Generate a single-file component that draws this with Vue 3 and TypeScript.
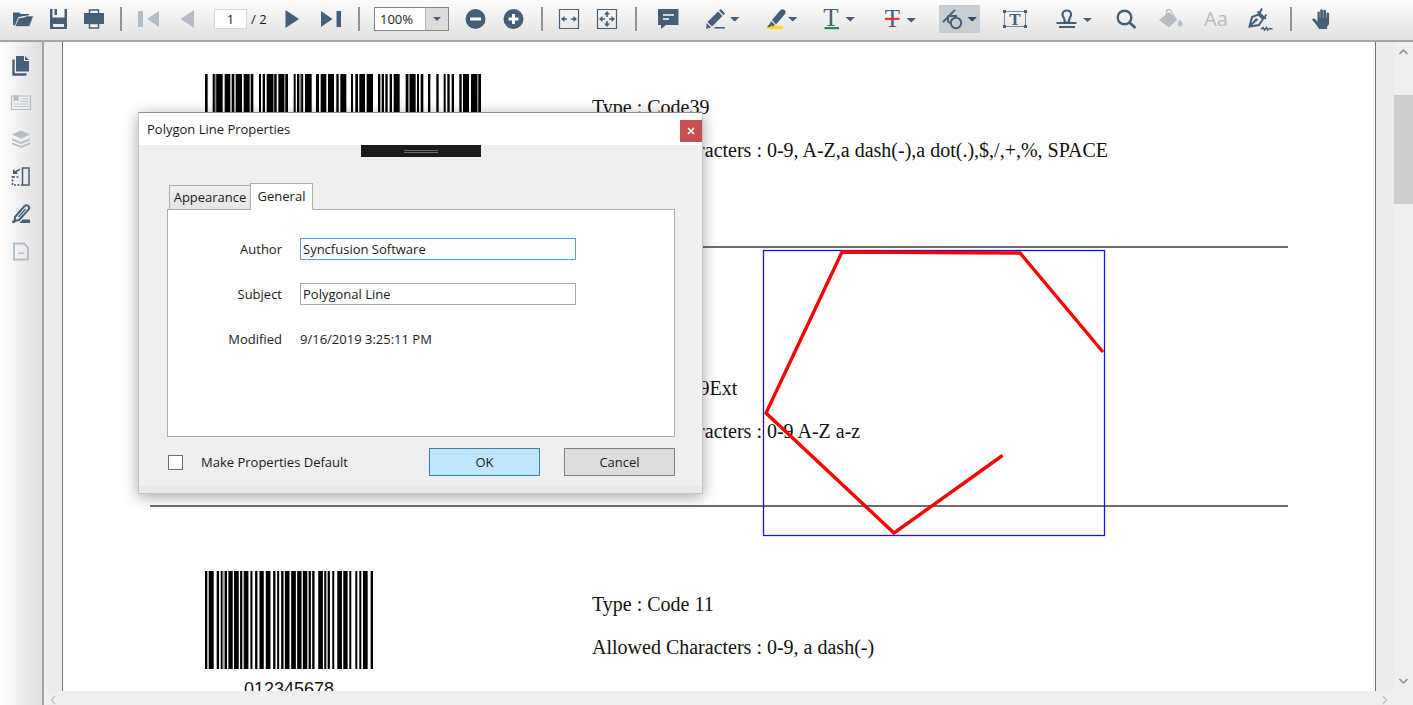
<script setup lang="ts">
import { ref } from 'vue'

type Bar = [start: number, end: number, faint?: boolean]

const code39: Bar[] = [
  [0, 8], [23, 53], [29, 34, true], [59, 76], [80, 88], [92, 111], [116, 134], [137, 145], [162, 168], [173, 180],
  [185, 204], [204, 216, true], [208, 214], [220, 237], [237, 241, true], [241, 249], [266, 272], [276, 283],
  [283, 295, true], [289, 294], [300, 320], [333, 342], [347, 364], [369, 387], [394, 401], [406, 424],
  [438, 444], [451, 459], [463, 480], [485, 504], [519, 526], [530, 537], [541, 548], [554, 561], [566, 584],
  [602, 609], [609, 614, true], [614, 632], [636, 642], [647, 655], [669, 676], [694, 701], [716, 722],
  [727, 734], [740, 747], [763, 770], [774, 792], [798, 816], [816, 820, true], [820, 828],
]

const code11: Bar[] = [
  [0, 7], [11, 26], [35, 42], [47, 53], [53, 59, true], [59, 66], [70, 83], [87, 101], [105, 111], [111, 117, true],
  [117, 130], [136, 142], [150, 157], [163, 176], [182, 196], [204, 211], [216, 222], [228, 235], [239, 253],
  [258, 272], [276, 289], [293, 306], [306, 311, true], [311, 317], [321, 328], [339, 353], [357, 363],
  [363, 368, true], [368, 374], [381, 387], [396, 410], [414, 427], [432, 438], [450, 456], [462, 468],
  [473, 487], [496, 503],
]

const page = ref('1')
const zoom = ref('100%')
const author = ref('Syncfusion Software')
const subject = ref('Polygonal Line')
const makeDefault = ref(false)
</script>

<template>
  <div class="app">
    <header class="toolbar" role="toolbar" aria-label="Document tools">
      <div class="group">
        <button class="tool" aria-label="Open">
          <svg width="22" height="28"><path d="M1 7.500h6l2 1.500h8v1.500l-5 .5-5.500 1L3 20.500 1 20z" /><path d="M6.500 13l6-1 2-1H21.500L17.500 21.500H3z" stroke="#f4f4f4" stroke-width=".6" /></svg>
        </button>
        <button class="tool" aria-label="Save">
          <svg width="18" height="28"><path d="M0 4h2.500v8.500h12V4H17v20H0zM3 19v3h11v-3z" fill-rule="evenodd" /><path d="M4.500 4H7v6H4.500z" /></svg>
        </button>
        <button class="tool" aria-label="Print">
          <svg width="20" height="28"><path d="M0 8h20v11H0z" /><path d="M5.500 8V5h9v3M5.500 18.500h9v4.500h-9z" fill="#f4f4f4" stroke="#465f78" stroke-width="1.500" /></svg>
        </button>
      </div>
      <span class="separator"></span>
      <div class="group">
        <button class="tool off" aria-label="First page" disabled>
          <svg width="22" height="28"><path d="M0 6h5v16H0zM9 14L21 6v16z" /></svg>
        </button>
        <button class="tool off" aria-label="Previous page" disabled>
          <svg width="22" height="28"><path d="M4.500 14L18 5v18z" /></svg>
        </button>
        <div class="pager">
          <input v-model="page" class="page-number" aria-label="Page number" />
          <span>/ 2</span>
        </div>
        <button class="tool" aria-label="Next page">
          <svg width="22" height="28"><path d="M3.500 5L17 14 3.500 23z" /></svg>
        </button>
        <button class="tool" aria-label="Last page">
          <svg width="22" height="28"><path d="M1 6l11.500 8L1 22zM16.500 6H21v16h-4.500z" /></svg>
        </button>
      </div>
      <span class="separator"></span>
      <div class="group zooming">
        <div class="zoom-box">
          <select v-model="zoom" aria-label="Zoom level">
            <option>50%</option>
            <option>100%</option>
            <option>200%</option>
          </select>
          <span class="zoom-arrow"><svg width="10" height="6"><path d="M1 1h8L5 5z" /></svg></span>
        </div>
        <button class="tool" aria-label="Zoom out">
          <svg width="22" height="28"><circle cx="10.500" cy="14" r="10" /><path d="M5 12.500h11v3H5z" fill="#fff" /></svg>
        </button>
        <button class="tool" aria-label="Zoom in">
          <svg width="22" height="28"><circle cx="10.500" cy="14" r="10" /><path d="M5.500 12.500H9V9h3v3.500h3.500v3H12V19H9v-3.500H5.500z" fill="#fff" /></svg>
        </button>
      </div>
      <span class="separator"></span>
      <div class="group">
        <button class="tool" aria-label="Fit width">
          <svg width="22" height="28"><path d="M.5 4.500h19v19H.5z" class="line" stroke-width="1.200" /><path d="M2 14l3.500-3v2.200H8v1.600H5.500V17zM18 14l-3.500-3v2.200H12v1.600h2.500V17z" /></svg>
        </button>
        <button class="tool" aria-label="Fit page">
          <svg width="22" height="28"><path d="M.5 4.500h19v19H.5z" class="line" stroke-width="1.200" /><path d="M2 14l3.500-3v2.200H8v1.600H5.500V17zM18 14l-3.500-3v2.200H12v1.600h2.500V17zM10 6l3 3.500h-2.200V12H9.200V9.500H7zM10 22l3-3.500h-2.200V16H9.200v2.500H7z" /></svg>
        </button>
      </div>
      <span class="separator"></span>
      <div class="group markup">
        <button class="tool" aria-label="Comment">
          <svg width="22" height="28"><path d="M1 4h20.500v16H9l-5 4v-4H1z" /><path d="M6 10h11M6 14h6" class="line light" stroke-width="1.600" /></svg>
        </button>
        <button class="tool" aria-label="Ink">
          <svg width="36" height="28"><path d="M15 6.500l4.500 4.500L9 21.500 4.500 17zM16 5.500L17.800 4 22 8.500l-1.500 1.700zM3.700 18L8 22.500 3 24z" /><path d="M11.500 22.800H22" class="line" stroke-width="1.500" /><path d="M27 12h9.500l-4.800 4.500z" /></svg>
        </button>
        <button class="tool" aria-label="Highlight">
          <svg width="34" height="28"><path d="M3 24l2-3h15v3z" fill="#fdd816" /><path d="M17.500 5Q19.500 3.500 21.500 5t.500 4L13 19.500 9 15zM8 16l4 4-2.500 1.500L8 20.500 7 22H4l3-3.500z" /><path d="M25 12h9.500l-4.800 4.500z" /></svg>
        </button>
        <button class="tool" aria-label="Underline">
          <svg width="34" height="28"><text x="10" y="21" class="serif-t">T</text><path d="M3.500 22h14.500v2.200H3.500z" fill="#139149" /><path d="M24.500 12h9.500l-4.800 4.500z" /></svg>
        </button>
        <button class="tool" aria-label="Strikethrough">
          <svg width="36" height="28"><text x="13.500" y="22" class="serif-t">T</text><path d="M6 12.800h14.500v2.200H6z" fill="#ff2d35" /><path d="M27.500 13h9.500l-4.800 4.500z" /></svg>
        </button>
        <button class="tool active" aria-label="Shapes">
          <svg width="41" height="28"><circle cx="17" cy="18" r="5.200" class="line" stroke-width="2" /><path d="M16 4.800L4 17M8.500 11H18M9 11v5.500l2 1.500" class="line" stroke-width="1.900" /><path d="M28.500 12H38l-4.800 4.500z" /></svg>
        </button>
        <button class="tool" aria-label="Text box">
          <svg width="24" height="28"><path d="M.5 6.500h21v15H.5z" class="line" stroke-width="1" opacity=".7" /><path d="M-1 5h3v3h-3zM20 5h3v3h-3zM-1 20h3v3h-3zM20 20h3v3h-3z" /><text x="11" y="20" class="small-t">T</text></svg>
        </button>
        <button class="tool" aria-label="Stamp">
          <svg width="40" height="28"><path d="M12.500 17.500C14 14 10.500 12.500 10.500 9.500a4.300 4 0 0 1 8.600 0c0 3-3.500 4.500-2 8z" class="line" stroke-width="2.200" /><path d="M4.500 18h20M7 22h16" class="line" stroke-width="2" /><path d="M31 13h9l-4.500 4z" /></svg>
        </button>
      </div>
      <div class="group extras">
        <button class="tool" aria-label="Search">
          <svg width="22" height="28"><circle cx="8.500" cy="12.500" r="6.800" class="line" stroke-width="2.400" /><path d="M13.500 17.500L19.500 23" class="line" stroke-width="2.800" /></svg>
        </button>
        <button class="tool off" aria-label="Fill colour" disabled>
          <svg width="26" height="28"><path d="M1 15L11 7l8.500 7.500L11 22.500z" /><path d="M8.500 12V7q0-2.500 2.500-2.500 1 0 2 1.500l5 8.500" class="line faint" stroke-width="1.300" /><path d="M21.500 14.500q4 3.500 3 5.500-1 2-3 1.500-2.500-1-1.500-4z" /></svg>
        </button>
        <button class="tool off font-tool" aria-label="Font" disabled>Aa</button>
        <button class="tool" aria-label="Signature">
          <svg width="26" height="28"><path d="M1.500 21.500L4 12l6.500-2.500 4.500 4.500-4 6zM1.500 21.500L7.500 15.500" class="line" stroke-width="2" /><circle cx="8.300" cy="14.800" r="1.500" /><path d="M9.500 6.500l8.500 7.500M11.500 8l2.500-4.500M16.500 12l2-2.500" class="line" stroke-width="1.900" /><path d="M13 24.500l2-2 1.500 2.500 2-2.500 1 2.500 2-1.500 3 .5" class="line" stroke-width="1.500" /></svg>
        </button>
      </div>
      <span class="separator"></span>
      <button class="tool" aria-label="Pan">
        <svg width="26" height="28"><path d="M4 14.500Q6 12.500 8 15l1.500 2V7q1.200-1.200 2.300 0v6h.4V5q1.400-1.300 2.700 0v8h.4V5.500q1.400-1.300 2.700 0V13h.4V8q1.400-1.200 2.700 0v10q0 2-2 3.500V24H11q-1-2-3-4.500z" /></svg>
      </button>
    </header>

    <div class="workspace">
      <nav class="sidebar" aria-label="Panels">
        <button class="tool" aria-label="Pages">
          <svg width="22" height="22"><path d="M6 1h8v5h5v10.500H6z" /><path d="M15 1l4 4h-4z" /><path d="M3.500 4.500v15h13" class="line" stroke-width="2.400" /></svg>
        </button>
        <button class="tool off" aria-label="Bookmarks" disabled>
          <svg width="22" height="22"><path d="M1.500 4h19v13.500h-19z" class="line faint" stroke-width="1.200" /><path d="M3.500 3.500h5V10L6 8l-2.500 2z" /><path d="M10.500 7h8M10.500 9.500h8M3.500 12h15M3.500 14.500h15" class="line faint" stroke-width=".8" /></svg>
        </button>
        <button class="tool off" aria-label="Layers" disabled>
          <svg width="22" height="22"><path d="M2 5.500l9-4 9 4-9 4z" /><path d="M2 9.500v1.700L11 15l9-3.800V9.500L11 13zM2 13.500v1.700L11 19l9-3.800v-1.700L11 17z" /></svg>
        </button>
        <button class="tool" aria-label="Organize pages">
          <svg width="22" height="22"><path d="M12.500 2h6.500v17h-6.500z" class="line" stroke-width="1.500" /><path d="M2.500 10v9H12M3 11h7" class="line" stroke-width="1.600" stroke-dasharray="2 1.500" /><path d="M3 3v5h5L6.600 6.300 10 4V2.500L5 5z" /></svg>
        </button>
        <button class="tool" aria-label="Redaction">
          <svg width="22" height="22"><path d="M5 14L14.500 3q2-1.500 3.800 0t.2 3.700L9 17l-4.200 1z" class="line" stroke-width="2" /><path d="M8.500 14l7-8" class="line" stroke-width="1.300" /><path d="M2.800 16.500L5.500 20H2zM12.500 16.500H20V20H9.500z" /></svg>
        </button>
        <button class="tool off" aria-label="Form" disabled>
          <svg width="22" height="22"><path d="M4 3.500h10l4 4V19.500H4z" class="line faint" stroke-width="1.800" /><path d="M8 12.500h6V14H8z" /></svg>
        </button>
      </nav>

      <main class="viewer">
        <div class="canvas">
          <article class="sheet">
            <section class="record first">
              <div class="picture">
                <svg class="barcode wide" viewBox="0 0 828 100" preserveAspectRatio="none" role="img" aria-label="Code 39 barcode">
                  <rect v-for="(b, i) in code39" :key="i" :x="b[0]" y="0" :width="b[1] - b[0]" height="100" :fill="b[2] ? '#888' : '#000'" />
                </svg>
              </div>
              <div class="facts">
                <p>Type : Code39</p>
                <p>Allowed Characters : 0-9, A-Z,a dash(-),a dot(.),$,/,+,%, SPACE</p>
              </div>
            </section>
            <section class="record second">
              <div class="picture"></div>
              <div class="facts">
                <p>Type : Code39Ext</p>
                <p>Allowed Characters : 0-9 A-Z a-z</p>
              </div>
            </section>
            <section class="record third">
              <div class="picture">
                <svg class="barcode narrow" viewBox="0 0 503 100" preserveAspectRatio="none" role="img" aria-label="Code 11 barcode">
                  <rect v-for="(b, i) in code11" :key="i" :x="b[0]" y="0" :width="b[1] - b[0]" height="100" :fill="b[2] ? '#aaa' : '#000'" />
                </svg>
                <p class="digits">012345678</p>
              </div>
              <div class="facts">
                <p>Type : Code 11</p>
                <p>Allowed Characters : 0-9, a dash(-)</p>
              </div>
            </section>
            <svg class="annotation" width="342" height="286" role="img" aria-label="Polygon line annotation">
              <rect x=".5" y=".5" width="341" height="285" fill="none" stroke="#1414e6" stroke-width="1.300" />
              <path d="M340 102L257 3 79 2 3 163 131 283 239.500 205.500" fill="none" stroke="#fa0202" stroke-width="3.400" />
            </svg>
          </article>
          <div class="scroll vertical">
            <svg width="19" height="20"><path d="M5.500 12L9.500 8l4 4" /></svg>
            <span class="thumb"></span>
            <svg class="end" width="19" height="20"><path d="M5.500 8L9.500 12l4-4" /></svg>
          </div>
        </div>
        <div class="scroll horizontal">
          <svg width="19" height="14"><path d="M11 5L7.500 9l3.500 4" /></svg>
          <svg width="19" height="14"><path d="M8 5l3.500 4L8 13" /></svg>
        </div>
      </main>
    </div>

    <form class="dialog" role="dialog" aria-labelledby="dialog-title" @submit.prevent>
      <div class="titlebar">
        <h1 id="dialog-title">Polygon Line Properties</h1>
        <button type="button" class="close" aria-label="Close">
          <svg width="8" height="8"><path d="M1 1l6 6M7 1L1 7" stroke="#fff" stroke-width="1.600" /></svg>
        </button>
      </div>
      <div class="grip"><span></span></div>
      <div class="dialog-body">
        <div class="tabs" role="tablist">
          <button type="button" class="tab" role="tab" aria-selected="false">Appearance</button>
          <button type="button" class="tab selected" role="tab" aria-selected="true">General</button>
        </div>
        <div class="panel" role="tabpanel">
          <label for="author">Author</label>
          <input id="author" v-model="author" class="focused" />
          <label for="subject">Subject</label>
          <input id="subject" v-model="subject" />
          <span class="name">Modified</span>
          <span>9/16/2019 3:25:11 PM</span>
        </div>
        <div class="actions">
          <label class="check"><input v-model="makeDefault" type="checkbox" />Make Properties Default</label>
          <button class="primary">OK</button>
          <button type="button">Cancel</button>
        </div>
      </div>
    </form>
  </div>
</template>

<style>
body {
  margin: 0;
}
</style>

<style scoped>
.app {
  position: relative;
  display: flex;
  flex-direction: column;
  height: 100vh;
  overflow: hidden;
  background: #ececec;
  color: #1a1a1a;
  font: 13px/18px 'Open Sans', 'Noto Sans', sans-serif;
}
button,
input,
select {
  box-sizing: border-box;
  margin: 0;
  padding: 0;
  border-radius: 0;
  color: inherit;
  font: inherit;
}
svg {
  display: block;
  overflow: visible;
}

.toolbar {
  display: flex;
  flex: none;
  align-items: center;
  gap: 16px;
  height: 38px;
  padding: 0 12px 2px;
  border-bottom: 2px solid #a5a5a5;
  background: linear-gradient(#fdfdfd, #e0e0e0);
}
.group {
  display: flex;
  align-items: center;
  gap: 16px;
}
.zooming {
  margin-left: -2px;
}
.markup {
  gap: 24px;
  margin-left: 4px;
}
.extras {
  gap: 20px;
  margin-left: 8px;
}
.separator {
  flex: none;
  width: 2px;
  height: 24px;
  background: #929292;
}
.tool {
  flex: none;
  border: 0;
  background: none;
  fill: #465f78;
}
.tool.off {
  color: #b4bdc5;
  fill: #b4bdc5;
}
.tool.active {
  background: #c6ced2;
  fill: #2e4a66;
}
.line {
  fill: none;
  stroke: #465f78;
}
.line.light {
  stroke: #fff;
}
.line.faint {
  stroke: #b4bdc5;
}
.serif-t {
  font: 25px 'Liberation Serif', serif;
  text-anchor: middle;
}
.small-t {
  font: bold 17px 'Liberation Serif', serif;
  text-anchor: middle;
}
.font-tool {
  width: 24px;
  font-size: 20px;
  line-height: 28px;
}
.pager {
  display: flex;
  align-items: center;
  gap: 4px;
  width: 52px;
  white-space: nowrap;
}
.page-number {
  width: 33px;
  height: 20px;
  border: 1px solid #d8d8d8;
  background: #fff;
  text-align: center;
}
.zoom-box {
  display: grid;
  grid-template-columns: 51px 24px;
  height: 24px;
}
.zoom-box select {
  grid-area: 1 / 1 / 2 / 3;
  padding-left: 5px;
  border: 1px solid #858585;
  background: #fff;
  appearance: none;
}
.zoom-arrow {
  display: flex;
  grid-area: 1 / 2;
  align-items: center;
  justify-content: center;
  border: 1px solid #858585;
  border-left-color: #b5b5b5;
  background: #dcdcdc;
  fill: #465f78;
  pointer-events: none;
}

.workspace {
  display: flex;
  flex: 1;
  min-height: 0;
}
.sidebar {
  display: flex;
  flex: none;
  flex-direction: column;
  align-items: center;
  gap: 15px;
  width: 42px;
  padding-top: 13px;
  border-right: 2px solid #a3a3a3;
  background: linear-gradient(90deg, #fff, #dedede);
}
.viewer {
  display: flex;
  flex: 1;
  flex-direction: column;
  min-width: 0;
}
.canvas {
  display: flex;
  flex: 1;
  min-height: 0;
  overflow: hidden;
}
.sheet {
  position: relative;
  flex: 1;
  margin: 0 18px;
  padding: 0 87px;
  overflow: hidden;
  border: solid #747474;
  border-width: 0 1px;
  background: #fff;
  color: #111;
  font: 20px/43px 'Liberation Serif', serif;
}
.record {
  display: grid;
  grid-template-columns: 387px 1fr;
  padding-left: 55px;
  border-bottom: 2px solid #6e6e6e;
}
.record p {
  margin: 0;
  white-space: nowrap;
}
.first .picture {
  padding-top: 32px;
}
.first .facts {
  padding: 44px 0 74px;
}
.second .facts {
  padding: 119px 0 52px;
}
.third {
  border: 0;
}
.third .picture {
  padding-top: 64px;
}
.third .facts {
  padding-top: 76px;
}
.barcode {
  height: 98px;
}
.wide {
  width: 276px;
}
.narrow {
  width: 168px;
}
.picture .digits {
  width: 168px;
  margin-top: 10px;
  font: 18px/20px 'Liberation Sans', sans-serif;
  text-align: center;
}
.annotation {
  position: absolute;
  top: 208px;
  left: 700px;
}
.scroll {
  display: flex;
  flex: none;
  background: #efefef;
  fill: none;
  stroke: #8c8c8c;
  stroke-width: 1.5;
}
.vertical {
  flex-direction: column;
  width: 19px;
}
.thumb {
  height: 109px;
  margin-top: 33px;
  background: #cdcdcd;
}
.vertical .end {
  margin-top: auto;
}
.horizontal {
  justify-content: space-between;
  height: 14px;
  padding-right: 19px;
  stroke: #c4c4c4;
}

.dialog {
  position: absolute;
  top: 112px;
  left: 138px;
  width: 563px;
  border: 1px solid #c4c4c4;
  border-top-color: #8f8f8f;
  background: #efefef;
  box-shadow: 0 3px 14px rgba(0, 0, 0, 0.35);
}
.titlebar {
  display: flex;
  align-items: center;
  justify-content: space-between;
  height: 32px;
  padding: 0 0 0 8px;
  background: #fff;
}
.titlebar h1 {
  margin: 0;
  font-size: 13px;
  font-weight: 400;
}
.close {
  display: grid;
  place-items: center;
  width: 22px;
  height: 22px;
  margin-top: 4px;
  border: 0;
  background: #c75050;
}
.grip {
  position: absolute;
  top: 32px;
  left: 50%;
  display: grid;
  place-items: center;
  width: 120px;
  height: 12px;
  margin-left: -60px;
  background: #1a1a1a;
}
.grip span {
  width: 34px;
  height: 1px;
  border: solid #6b6b6b;
  border-width: 1px 0;
}
.dialog-body {
  padding: 38px 27px 10px 28px;
  border-bottom: 7px solid #e9e9e9;
}
.tabs {
  position: relative;
  display: flex;
  align-items: flex-end;
  height: 27px;
  margin: 0 0 -1px 2px;
}
.tab {
  width: 82px;
  height: 25px;
  padding-bottom: 1px;
  border: 1px solid #acacac;
  background: linear-gradient(#f0f0f0, #e4e4e4);
}
.tab.selected {
  width: 63px;
  height: 27px;
  margin-left: -1px;
  border-bottom-color: #fff;
  background: #fff;
}
.panel {
  display: grid;
  grid-template-columns: 114px minmax(0, 276px);
  grid-auto-rows: 22px;
  align-content: start;
  gap: 23px 18px;
  height: 198px;
  padding-top: 28px;
  border: 1px solid #acacac;
  background: #fff;
  line-height: 22px;
}
.panel label,
.panel .name {
  text-align: right;
}
.panel input {
  padding: 0 2px;
  border: 1px solid #ababab;
  background: #fff;
}
.panel input.focused {
  border-color: #569de5;
}
.actions {
  display: flex;
  align-items: center;
  gap: 24px;
  margin-top: 11px;
}
.check {
  display: flex;
  align-items: center;
  flex: 1;
  gap: 18px;
  padding-left: 1px;
}
.check input {
  width: 15px;
  height: 15px;
  border: 1px solid #707070;
  background: #fff;
  appearance: none;
}
.check input:checked {
  background: #465f78;
}
.actions button {
  width: 111px;
  height: 28px;
  border: 1px solid #808080;
  background: #dddddd;
}
.actions .primary {
  border-color: #3c7fb1;
  background: #bee6fd;
}
</style>
